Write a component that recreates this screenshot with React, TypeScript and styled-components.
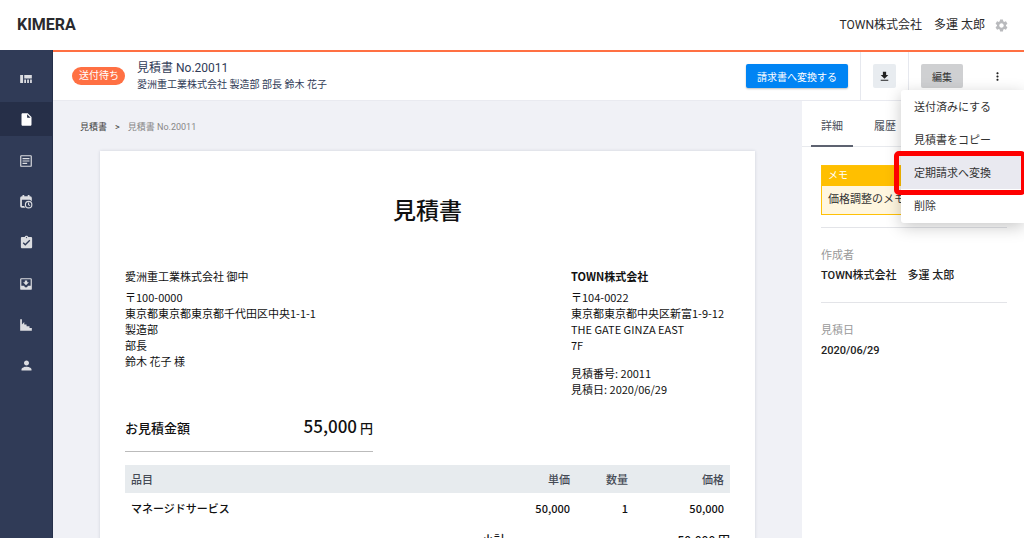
import React from "react";
import styled, { createGlobalStyle, css } from "styled-components";
import {
  MdInsertDriveFile,
  MdAssignmentTurnedIn,
  MdPerson,
  MdSettings,
  MdMoreVert,
  MdFileDownload,
} from "react-icons/md";

const ui = `Roboto, "Noto Sans CJK JP", sans-serif`;
const paper = `"Noto Sans CJK JP", sans-serif`;

const GlobalStyle = createGlobalStyle`
  *, *::before, *::after { box-sizing: border-box; }
  html, body, #root { height: 100%; }
  body { margin: 0; background: #f0f1f6; font: 11px/16px ${ui}; color: #333; overflow: hidden; }
  h1, h2, p, dl, dd, dt, ul { margin: 0; padding: 0; font-weight: 400; }
  button { font-family: inherit; border: 0; padding: 0; cursor: pointer; }
  a { color: inherit; text-decoration: none; }
`;

const Page = styled.div`
  display: flex;
  flex-direction: column;
  height: 100vh;
`;

const Header = styled.header`
  display: flex;
  align-items: center;
  justify-content: space-between;
  flex: none;
  height: 50px;
  padding: 0 15px 0 17px;
  background: #fff;
`;

const Logo = styled.a`
  color: #2a2a2e;
  font-size: 16px;
  font-weight: 700;
`;

const Account = styled.div`
  display: flex;
  align-items: center;
  gap: 9px;
  font-size: 12px;
  color: #2b2b2b;
`;

const IconButton = styled.button<{ $color?: string }>`
  display: flex;
  align-items: center;
  justify-content: center;
  background: none;
  color: ${(p) => p.$color ?? "#222"};
`;

const Body = styled.div`
  display: flex;
  flex: 1;
  min-height: 0;
`;

const Sidebar = styled.nav`
  flex: none;
  width: 53px;
  padding-top: 8px;
  border-right: 1px solid #26304a;
  background: #303b57;
`;

const NavItem = styled.a<{ $active?: boolean }>`
  display: flex;
  align-items: center;
  justify-content: center;
  height: 41px;
  color: #dcdde1;
  ${(p) =>
    p.$active &&
    css`
      height: 34px;
      margin: 3px 0 4px;
      background: #262f48;
      color: #fff;
    `}
`;

const Content = styled.div`
  display: flex;
  flex-direction: column;
  flex: 1;
  min-width: 0;
  border-top: 2px solid #ff7043;
`;

const Toolbar = styled.div`
  display: flex;
  flex: none;
  height: 49px;
  padding-left: 19px;
  background: #fff;
  border-bottom: 1px solid #e9eaf0;
`;

const Summary = styled.div`
  display: flex;
  align-items: center;
  flex: 1;
  gap: 12px;
  color: #303b57;
`;

const Status = styled.span`
  padding: 0 6px 0 7px;
  border-radius: 9px;
  background: #ff7043;
  color: #fff;
  font-size: 10px;
  line-height: 18px;
`;

const Title = styled.h1`
  font-size: 12px;
  line-height: 18px;
`;

const Subtitle = styled.p`
  font-size: 10px;
  line-height: 16px;
`;

const ToolGroup = styled.div<{ $divided?: boolean; $last?: boolean }>`
  position: relative;
  display: flex;
  align-items: center;
  padding: 0 ${(p) => (p.$last ? 17 : 12)}px 0 12px;
  ${(p) => p.$divided && css`border-left: 1px solid #e6e8ee;`}
`;

const Button = styled.button<{ $tone: "primary" | "plain" | "pressed" }>`
  display: flex;
  align-items: center;
  justify-content: center;
  height: 24px;
  padding: 0 ${(p) => (p.$tone === "plain" ? 5 : 11)}px;
  border-radius: 2px;
  font-size: 10px;
  ${(p) => p.$tone === "primary" && css`background: #0084f4; color: #fff; box-shadow: 0 1px 2px rgba(0, 0, 0, 0.25);`}
  ${(p) => p.$tone === "plain" && css`background: #e8ecf0; color: #222;`}
  ${(p) => p.$tone === "pressed" && css`background: #cfd0d2; color: #333;`}
`;

const More = styled(IconButton)`
  width: 20px;
  height: 24px;
  margin-left: 24px;
`;

const Menu = styled.ul`
  position: absolute;
  z-index: 2;
  top: 38px;
  right: 0;
  width: 123px;
  padding-bottom: 1px;
  border-radius: 3px 0 0 3px;
  background: #fff;
  box-shadow: 0 4px 16px rgba(0, 0, 0, 0.22);
  list-style: none;
`;

const MenuItem = styled.button<{ $selected?: boolean }>`
  position: relative;
  display: block;
  width: 100%;
  height: 33px;
  padding: 0 0 2px 13px;
  background: ${(p) => (p.$selected ? "#e9e9f0" : "transparent")};
  color: #333;
  font-size: 11px;
  text-align: left;
  ${(p) =>
    p.$selected &&
    css`
      &::after {
        content: "";
        position: absolute;
        inset: -5px -2px -6px -7px;
        border: 5px solid #fe0000;
        border-radius: 5px;
      }
    `}
`;

const Split = styled.div`
  display: flex;
  flex: 1;
  min-height: 0;
`;

const Main = styled.main`
  flex: 1;
  min-width: 0;
  overflow: hidden;
`;

const Breadcrumb = styled.nav`
  display: flex;
  gap: 8px;
  padding: 18px 27px 16px;
  font-size: 9px;
  color: #444;
`;

const Current = styled.span`
  color: #888;
`;

const Paper = styled.article`
  margin: 0 47px;
  padding: 40px 25px;
  background: #fff;
  box-shadow: 0 0 3px rgba(40, 50, 80, 0.16);
  font-family: ${paper};
  color: #111;
`;

const PaperTitle = styled.h2`
  font-size: 23px;
  font-weight: 500;
  line-height: 36px;
  text-align: center;
`;

const Parties = styled.div`
  display: flex;
  justify-content: space-between;
  margin-top: 41px;
`;

const Party = styled.div`
  min-width: 159px;
`;

const PartyName = styled.p<{ $bold?: boolean }>`
  margin-bottom: 5px;
  font-weight: ${(p) => (p.$bold ? 700 : 400)};
`;

const Refs = styled.div`
  margin-top: 12px;
`;

const Amount = styled.div`
  display: flex;
  align-items: baseline;
  justify-content: space-between;
  width: 248px;
  margin-top: 16px;
  padding-bottom: 10px;
  border-bottom: 1px solid #bbb;
  font-size: 13px;
  font-weight: 500;
  line-height: 26px;
`;

const Total = styled.span`
  font-size: 17px;
`;

const Items = styled.table`
  width: 100%;
  margin-top: 13px;
  border-collapse: collapse;
  font-size: 11px;
  line-height: 16px;
`;

const Cell = styled.td<{ $left?: boolean }>`
  padding: 7px 6px 6px;
  font-weight: 500;
  text-align: ${(p) => (p.$left ? "left" : "right")};
`;

const HeadCell = styled(Cell)`
  padding: 6px;
  background: #e7ebee;
  color: #454a55;
`;

const Sum = styled.div`
  display: flex;
  justify-content: space-between;
  margin-top: 10px;
  padding-left: 357px;
  font-size: 12px;
  font-weight: 500;
`;

const Aside = styled.aside`
  flex: none;
  width: 222px;
  background: #fff;
`;

const Tabs = styled.div`
  display: flex;
  gap: 11px;
  height: 46px;
  padding-left: 9px;
  border-bottom: 1px solid #e8eaee;
`;

const Tab = styled.button<{ $active?: boolean }>`
  width: 42px;
  height: 46px;
  padding-top: 4px;
  background: none;
  border-bottom: ${(p) => (p.$active ? "2px solid #5d6270" : "2px solid transparent")};
  color: #4b4f5a;
  font-size: 11px;
`;

const Details = styled.div`
  padding: 18px 17px 0 19px;
`;

const Memo = styled.section`
  border: 1px solid #ffc107;
  background: #fff6df;
`;

const MemoTitle = styled.h2`
  padding-left: 6px;
  background: #ffbf00;
  color: #fff;
  font-size: 10px;
  line-height: 20px;
`;

const MemoText = styled.p`
  padding: 0 6px;
  line-height: 28px;
  white-space: nowrap;
  overflow: hidden;
`;

const Field = styled.div`
  height: 75px;
  margin-top: 12px;
  padding-top: 20px;
  border-top: 1px solid #e3e4e8;

  & + & { margin-top: 0; }
`;

const Label = styled.dt`
  color: #999;
`;

const Value = styled.dd`
  margin-top: 4px;
  font-weight: 500;
  color: #222;
`;

const Glyph = ({ children }: { children: React.ReactNode }) => (
  <svg width="14" height="14" viewBox="0 0 24 24" fill="currentColor" aria-hidden="true">
    {children}
  </svg>
);

const nav = [
  { label: "ダッシュボード", icon: <Glyph><path d="M2 5h5v14H2zM9 5h13v6H9zM9 13h3v6H9zM14 13h3v6h-3zM19 13h3v6h-3z" /></Glyph> },
  { label: "見積書", active: true, icon: <MdInsertDriveFile size={15} /> },
  { label: "請求書", icon: <Glyph><path fillRule="evenodd" d="M4 2h16a2 2 0 0 1 2 2v16a2 2 0 0 1-2 2H4a2 2 0 0 1-2-2V4c0-1 1-2 2-2zm0 2v16h16V4zm2 3h12v2H6zm0 4h12v2H6zm0 4h8v2H6z" /></Glyph> },
  { label: "定期請求", icon: <Glyph><path fillRule="evenodd" d="M5 22a3 3 0 0 1-3-3V5a3 3 0 0 1 3-3h1V0h3v2h6V0h3v2h1a3 3 0 0 1 3 3v5.500A7.500 7.500 0 0 0 19 8.500V8H5v11h4a8 8 0 0 0 2 3zM16.500 10a6.500 6.500 0 1 0 0 13 6.500 6.500 0 0 0 0-13zm0 2a4.500 4.500 0 1 1 0 9 4.500 4.500 0 0 1 0-9zm-1 1v4.200l3 1.800 1-1.500-2.200-1.300V13z" /></Glyph> },
  { label: "タスク", icon: <MdAssignmentTurnedIn size={15} /> },
  { label: "受信箱", icon: <Glyph><path fillRule="evenodd" d="M4 2h16a2 2 0 0 1 2 2v16a2 2 0 0 1-2 2H4a2 2 0 0 1-2-2V4c0-1 1-2 2-2zm0 2v11h5a3 3 0 0 0 6 0h5V4zm6 2h4v3h3l-5 5-5-5h3z" /></Glyph> },
  { label: "レポート", icon: <Glyph><path d="M2 2h3v9l4-4v4h4v3h5v3h4v5H2z" /></Glyph> },
  { label: "ユーザー", icon: <MdPerson size={15} /> },
];

export default function App() {
  return (
    <Page>
      <GlobalStyle />
      <Header>
        <Logo href="#">KIMERA</Logo>
        <Account>
          <span>TOWN株式会社　多運 太郎</span>
          <IconButton $color="#b9babd" aria-label="設定"><MdSettings size={15} /></IconButton>
        </Account>
      </Header>
      <Body>
        <Sidebar>
          {nav.map((n) => (
            <NavItem key={n.label} href="#" aria-label={n.label} $active={n.active}>{n.icon}</NavItem>
          ))}
        </Sidebar>
        <Content>
          <Toolbar>
            <Summary>
              <Status>送付待ち</Status>
              <div>
                <Title>見積書 No.20011</Title>
                <Subtitle>愛洲重工業株式会社 製造部 部長 鈴木 花子</Subtitle>
              </div>
            </Summary>
            <ToolGroup><Button $tone="primary">請求書へ変換する</Button></ToolGroup>
            <ToolGroup $divided>
              <Button $tone="plain" aria-label="ダウンロード"><MdFileDownload size={13} /></Button>
            </ToolGroup>
            <ToolGroup $divided $last>
              <Button $tone="pressed">編集</Button>
              <More aria-label="その他"><MdMoreVert size={13} /></More>
              <Menu>
                <li><MenuItem>送付済みにする</MenuItem></li>
                <li><MenuItem>見積書をコピー</MenuItem></li>
                <li><MenuItem $selected>定期請求へ変換</MenuItem></li>
                <li><MenuItem>削除</MenuItem></li>
              </Menu>
            </ToolGroup>
          </Toolbar>
          <Split>
            <Main>
              <Breadcrumb>
                <a href="#">見積書</a>
                <span>&gt;</span>
                <Current>見積書 No.20011</Current>
              </Breadcrumb>
              <Paper>
                <PaperTitle>見積書</PaperTitle>
                <Parties>
                  <Party>
                    <PartyName>愛洲重工業株式会社 御中</PartyName>
                    <p>〒100-0000</p>
                    <p>東京都東京都東京都千代田区中央1-1-1</p>
                    <p>製造部</p>
                    <p>部長</p>
                    <p>鈴木 花子 様</p>
                  </Party>
                  <Party>
                    <PartyName $bold>TOWN株式会社</PartyName>
                    <p>〒104-0022</p>
                    <p>東京都東京都中央区新富1-9-12</p>
                    <p>THE GATE GINZA EAST</p>
                    <p>7F</p>
                    <Refs>
                      <p>見積番号: 20011</p>
                      <p>見積日: 2020/06/29</p>
                    </Refs>
                  </Party>
                </Parties>
                <Amount>
                  <span>お見積金額</span>
                  <span><Total>55,000</Total> 円</span>
                </Amount>
                <Items>
                  <colgroup>
                    <col />
                    <col width="90" />
                    <col width="58" />
                    <col width="96" />
                  </colgroup>
                  <thead>
                    <tr>
                      <HeadCell as="th" $left>品目</HeadCell>
                      <HeadCell as="th">単価</HeadCell>
                      <HeadCell as="th">数量</HeadCell>
                      <HeadCell as="th">価格</HeadCell>
                    </tr>
                  </thead>
                  <tbody>
                    <tr>
                      <Cell $left>マネージドサービス</Cell>
                      <Cell>50,000</Cell>
                      <Cell>1</Cell>
                      <Cell>50,000</Cell>
                    </tr>
                  </tbody>
                </Items>
                <Sum><span>小計</span><span>50,000 円</span></Sum>
              </Paper>
            </Main>
            <Aside>
              <Tabs>
                <Tab $active>詳細</Tab>
                <Tab>履歴</Tab>
              </Tabs>
              <Details>
                <Memo>
                  <MemoTitle>メモ</MemoTitle>
                  <MemoText>価格調整のメモ</MemoText>
                </Memo>
                <dl>
                  <Field><Label>作成者</Label><Value>TOWN株式会社　多運 太郎</Value></Field>
                  <Field><Label>見積日</Label><Value>2020/06/29</Value></Field>
                </dl>
              </Details>
            </Aside>
          </Split>
        </Content>
      </Body>
    </Page>
  );
}
